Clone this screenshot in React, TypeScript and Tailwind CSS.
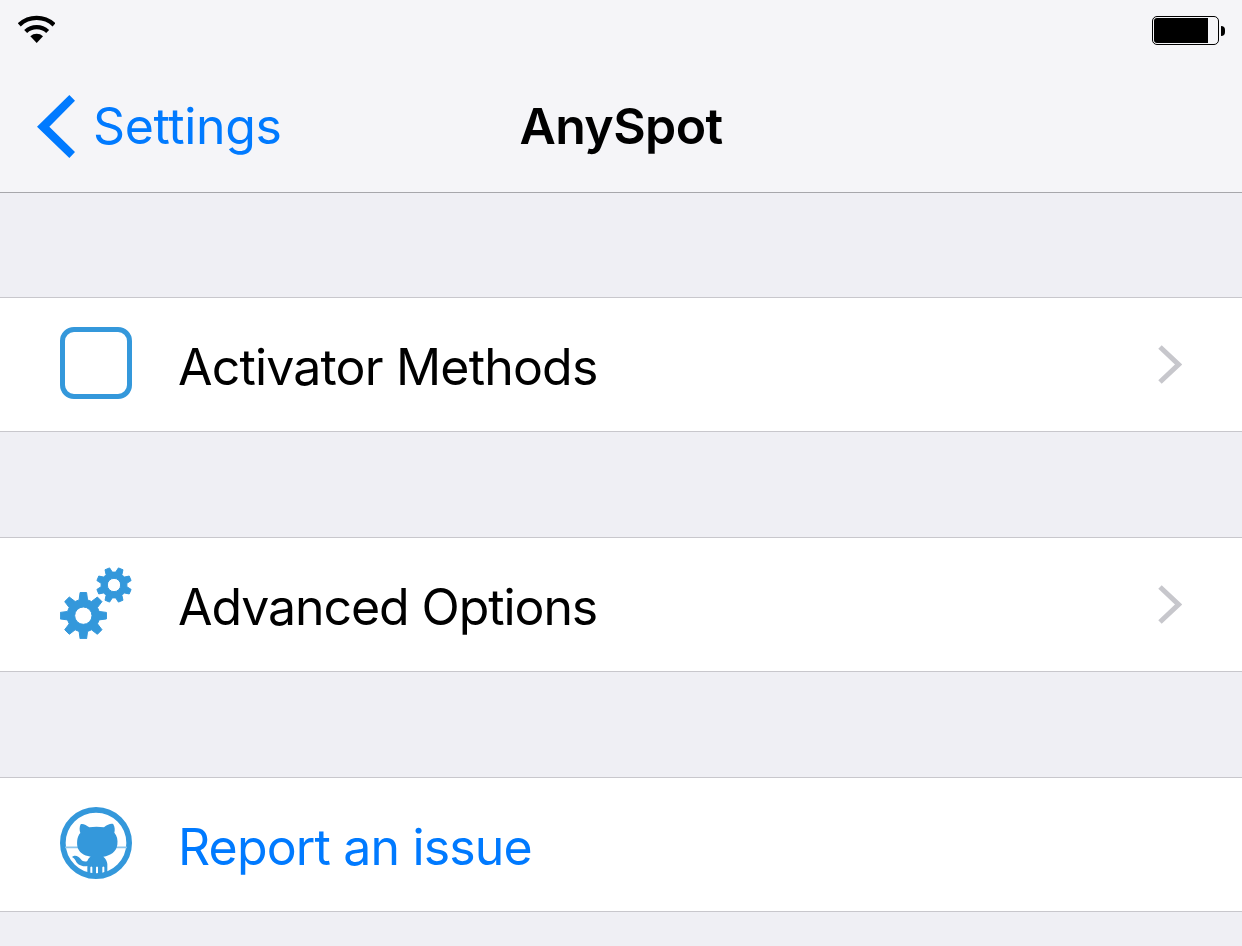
import type { ReactNode } from "react";

function gearPath(cx: number, cy: number, outer: number, root: number, hole: number, offset: number) {
  const points: string[] = [];
  const add = (radius: number, deg: number) => {
    const a = (deg * Math.PI) / 180;
    points.push(`${(cx + radius * Math.cos(a)).toFixed(2)} ${(cy + radius * Math.sin(a)).toFixed(2)}`);
  };
  for (let i = 0; i < 8; i++) {
    const mid = offset + i * 45;
    add(root, mid - 15);
    add(outer, mid - 8);
    add(outer, mid + 8);
    add(root, mid + 15);
  }
  return `M${points.join("L")}ZM${cx - hole} ${cy}a${hole} ${hole} 0 1 0 ${hole * 2} 0a${hole} ${hole} 0 1 0 ${-hole * 2} 0Z`;
}

function WifiIcon() {
  return (
    <svg className="h-7 w-[37px]" viewBox="54 45 111 84" fill="none" stroke="#000" strokeWidth="13">
      <path d="M57.8 74.5A76 76 0 0 1 162.2 74.5" />
      <path d="M77 94.5A48.5 48.5 0 0 1 143 94.5" />
      <path d="M110 129L91 109A28 28 0 0 1 129 109Z" fill="#000" stroke="none" />
    </svg>
  );
}

function Battery() {
  return (
    <div className="flex items-center gap-0.5">
      <div className="h-[29px] w-[67px] rounded-[5px] border border-black p-px">
        <div className="h-full w-[54px] rounded-l-[3px] bg-black" />
      </div>
      <div className="h-2.5 w-1 rounded-r-full bg-black" />
    </div>
  );
}

function BackChevron() {
  return (
    <svg className="h-[63px] w-[38px]" viewBox="111 285 114 189" fill="#007aff">
      <path d="M111 380L208 285L225 302L148 380L225 456L208 474Z" />
    </svg>
  );
}

function Chevron() {
  return (
    <svg className="h-[39px] w-6" viewBox="0 0 24 39" fill="none" stroke="#c7c7cc" strokeWidth="5">
      <path d="M2 2L20.5 19.5L2 37" />
    </svg>
  );
}

function SquareIcon() {
  return <div className="size-[72px] rounded-[14px] border-[5px] border-[#3498db]" />;
}

function GearsIcon() {
  return (
    <svg className="size-[72px]" viewBox="30 36 216 216" fill="#3498db" fillRule="evenodd" stroke="#3498db" strokeWidth="3" strokeLinejoin="round">
      <path d={gearPath(100, 182, 70, 49, 26, 0)} />
      <path d={gearPath(192, 90, 53, 39, 20, 22.5)} />
    </svg>
  );
}

function OctocatIcon() {
  return (
    <svg className="size-[72px]" viewBox="30 36 216 216" fill="#3498db">
      <circle cx="138" cy="144" r="99.5" fill="none" stroke="#3498db" strokeWidth="17" />
      <path d="M45 157H231" stroke="#8cc5ec" strokeWidth="5" />
      <path d="M92 88C97 84 110 91 118 97Q139 93 162 97C172 89 185 84 190 88C195 96 195 107 193 113C201 122 204 134 202 149C199 170 182 181 160 185C167 190 171 198 172 207V236H163V217Q160 212 157 217V240H144V217Q141 212 138 217V240H127V217Q124 212 121 217V237H112V213C95 216 82 208 77 197C74 191 71 189 66 186C74 178 86 183 92 192C98 200 106 201 112 198C114 192 117 188 122 185C100 182 86 172 82 154C80 137 83 122 91 114C88 105 88 96 92 88Z" />
    </svg>
  );
}

type RowProps = {
  icon: ReactNode;
  label: string;
  className: string;
  link?: boolean;
};

function Row({ icon, label, className, link }: RowProps) {
  return (
    <button className="flex h-[135px] w-full items-center border-y border-[#c8c7cc] bg-white px-[60px] text-left">
      <span className="mr-[46px] mb-1">{icon}</span>
      <span className={`flex-1 pt-1 whitespace-nowrap ${className}`}>{label}</span>
      {!link && <Chevron />}
    </button>
  );
}

export default function App() {
  return (
    <div className="h-[946px] w-full overflow-hidden bg-[#efeff4] font-['Inter',sans-serif] text-[50px] leading-[60px] text-black">
      <header className="h-[193px] border-b border-[#a7a7ab] bg-[#f5f5f8]">
        <div className="flex h-[60px] items-start justify-between pt-[15px] pr-[17px] pl-[18px]">
          <WifiIcon />
          <div className="pt-px">
            <Battery />
          </div>
        </div>
        <nav className="grid h-[132px] grid-cols-[1fr_auto_1fr] items-center pl-[37px]">
          <button className="flex items-center gap-[18px] text-[#007aff]">
            <BackChevron />
            <span className="tracking-[-0.35px]">Settings</span>
          </button>
          <h1 className="mr-[37px] font-semibold tracking-[-0.6px]">AnySpot</h1>
        </nav>
      </header>
      <main className="flex flex-col gap-[105px] pt-[104px]">
        <Row icon={<SquareIcon />} label="Activator Methods" className="tracking-[-0.82px]" />
        <Row icon={<GearsIcon />} label="Advanced Options" className="tracking-[-1.08px]" />
        <Row icon={<OctocatIcon />} label="Report an issue" className="tracking-[-0.85px] text-[#007aff]" link />
      </main>
    </div>
  );
}
